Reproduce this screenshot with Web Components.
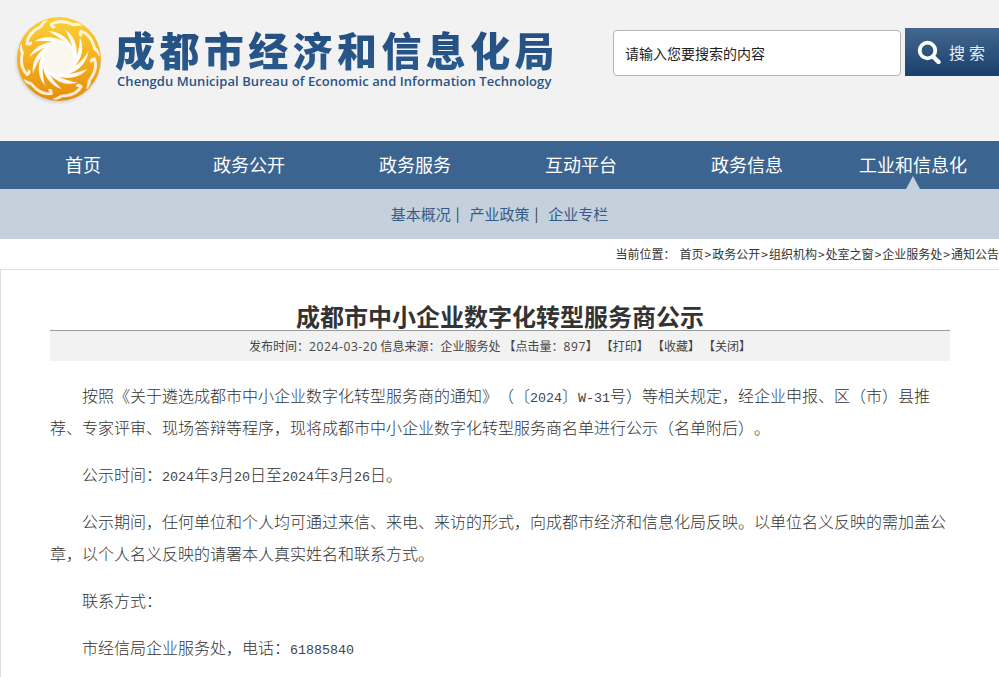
<!DOCTYPE html>
<html lang="zh">
<head>
<meta charset="utf-8">
<title>成都市中小企业数字化转型服务商公示</title>
<style>
html, body { margin: 0; padding: 0; background: #fff; overflow: hidden; }
body { font-family: "Noto Sans CJK SC", sans-serif; text-spacing-trim: space-all; }
.n { font-family: "Liberation Mono", monospace; font-size: 13.33px; line-height: 1; color: #444; }
</style>
</head>
<body>
<site-header></site-header>
<main-nav></main-nav>
<sub-nav></sub-nav>
<bread-crumb></bread-crumb>
<article-card>
  <p>按照《关于遴选成都市中小企业数字化转型服务商的通知》（〔<span class="n">2024</span>〕<span class="n">W-31</span>号）等相关规定，经企业申报、区（市）县推荐、专家评审、现场答辩等程序，现将成都市中小企业数字化转型服务商名单进行公示（名单附后）。</p>
  <p>公示时间：<span class="n">2024</span>年<span class="n">3</span>月<span class="n">20</span>日至<span class="n">2024</span>年<span class="n">3</span>月<span class="n">26</span>日。</p>
  <p>公示期间，任何单位和个人均可通过来信、来电、来访的形式，向成都市经济和信息化局反映。以单位名义反映的需加盖公章，以个人名义反映的请署本人真实姓名和联系方式。</p>
  <p>联系方式：</p>
  <p>市经信局企业服务处，电话：<span class="n">61885840</span></p>
</article-card>
<script>
const FONT = `"Noto Sans CJK SC", sans-serif`

class SiteLogo extends HTMLElement {
    constructor() {
        super()
        this.attachShadow({mode: 'open'})
        this.shadowRoot.innerHTML = this.getTemplate()
    }

    getBlades() {
        let out = ''
        for (let i = 0; i < 11; i++) {
            const a = i * 360 / 11
            out += `<path transform="rotate(${a} 48 48)" d="M37 20 C47 20 58 26 63 40 L58 37 C54 31 47 25 37 20Z" fill="#fff" opacity=".95"/>`
        }
        for (let i = 0; i < 7; i++) {
            const a = i * 360 / 7 + 12
            out += `<path transform="rotate(${a} 48 48)" d="M33 14 C38 9 46 8 54 10 C59 8 62 9 64 11 C60 11 58 12 55 13 C47 11 40 12 35 16 L38 17 C38 20 34 20 33 18 C31 17 31 15 33 14Z" fill="#fff" opacity=".82"/>`
        }
        return out
    }

    getTemplate() {
        return `
        <svg width="96" height="96" viewBox="0 0 96 96" aria-hidden="true">
            <defs>
                <linearGradient id="gold" x1="0" y1="0" x2="0" y2="1">
                    <stop offset="0" stop-color="#fbd13a"/>
                    <stop offset=".55" stop-color="#f3ad1c"/>
                    <stop offset="1" stop-color="#e58d0d"/>
                </linearGradient>
                <radialGradient id="shade" cx=".5" cy=".5" r=".5">
                    <stop offset=".8" stop-color="#8a8a8a" stop-opacity=".6"/>
                    <stop offset="1" stop-color="#8a8a8a" stop-opacity="0"/>
                </radialGradient>
            </defs>
            <circle cx="47" cy="50" r="44" fill="url(#shade)"/>
            <circle cx="48" cy="48" r="42" fill="url(#gold)"/>
            <circle cx="48" cy="48" r="18" fill="#faf7ef"/>
            ${this.getBlades()}
        </svg>
        <style>
        :host { display: block; width: 96px; height: 96px; flex: none; }
        svg { display: block; }
        </style>
        `
    }
}

class SearchBox extends HTMLElement {
    constructor() {
        super()
        this.attachShadow({mode: 'open'})
        this.shadowRoot.innerHTML = `
        <div class="field">请输入您要搜索的内容</div>
        <div class="btn">
            <svg width="24" height="24" viewBox="0 0 24 24" aria-hidden="true">
                <circle cx="10.5" cy="10.5" r="7.8" fill="none" stroke="#fff" stroke-width="3.8"/>
                <path d="M16 16.5 L21.5 22" stroke="#fff" stroke-width="4.4" stroke-linecap="round"/>
            </svg>
            <span>搜索</span>
        </div>
        <style>
        :host { display: flex; gap: 4px; flex: none; font-family: ${FONT}; }
        .field {
            box-sizing: border-box; width: 288px; height: 46px; padding-left: 11px;
            background: #fff; border: 1px solid #b5b5b5; border-radius: 4px;
            font-size: 14px; line-height: 44px; color: #222; white-space: nowrap;
        }
        .btn {
            box-sizing: border-box; width: 94px; height: 48px; margin-top: -2px; padding-left: 12px;
            display: flex; align-items: center; gap: 8px;
            background: linear-gradient(#42688f, #1a3f6d);
            color: #e8edf3; font-size: 16px; letter-spacing: 4px; white-space: nowrap;
        }
        </style>
        `
    }
}

class SiteHeader extends HTMLElement {
    constructor() {
        super()
        this.attachShadow({mode: 'open'})
        this.shadowRoot.innerHTML = `
        <site-logo></site-logo>
        <div class="brand">
            <div class="cn">成都市经济和信息化局</div>
            <div class="en">Chengdu Municipal Bureau of Economic and Information Technology</div>
        </div>
        <search-box></search-box>
        <style>
        :host { display: flex; height: 141px; background: #f2f2f2; box-sizing: border-box; padding: 11px 0 0 11px; overflow: hidden; }
        .brand { width: 498px; flex: none; margin-left: 8px; padding-top: 15px; }
        .cn {
            font-size: 40px; line-height: 46px; font-weight: 900; letter-spacing: 4.4px; white-space: nowrap;
            background: linear-gradient(#234d80, #2a5a8c);
            -webkit-background-clip: text; background-clip: text; color: transparent;
        }
        .en { font-family: "Open Sans", sans-serif; font-weight: 600; font-size: 13px; letter-spacing: .065px; line-height: 18px; color: #2b5384; white-space: nowrap; margin-left: 2px; }
        search-box { margin-top: 19px; }
        </style>
        `
    }
}

class MainNav extends HTMLElement {
    constructor() {
        super()
        this.attachShadow({mode: 'open'})
        const items = ['首页', '政务公开', '政务服务', '互动平台', '政务信息', '工业和信息化']
        this.shadowRoot.innerHTML = `
        ${items.map((t, i) => `<a class="${i == 5 ? 'on' : ''}">${t}</a>`).join('')}
        <style>
        :host { display: grid; grid-template-columns: repeat(6, 166px); height: 48px; background: #3b6590; font-family: ${FONT}; }
        a { position: relative; text-align: center; color: #fff; font-size: 18px; line-height: 46px; white-space: nowrap; }
        a.on::after {
            content: ""; position: absolute; left: 50%; bottom: 0; margin-left: -7px;
            border: 7px solid transparent; border-top: 0; border-bottom: 13px solid #c4d0dc;
        }
        </style>
        `
    }
}

class SubNav extends HTMLElement {
    constructor() {
        super()
        this.attachShadow({mode: 'open'})
        this.shadowRoot.innerHTML = `
        <span>基本概况</span><i>|</i><span>产业政策</span><i>|</i><span>企业专栏</span>
        <style>
        :host { display: flex; justify-content: center; height: 50px; background: #c4d0dc; font-family: ${FONT}; font-size: 15px; line-height: 49px; color: #355c88; }
        i { font-style: normal; margin: 0 10px 0 5px; color: #333; font-size: 14px; }
        </style>
        `
    }
}

class BreadCrumb extends HTMLElement {
    constructor() {
        super()
        this.attachShadow({mode: 'open'})
        const path = ['首页', '政务公开', '组织机构', '处室之窗', '企业服务处', '通知公告']
        this.shadowRoot.innerHTML = `
        <span class="lead">当前位置：</span>${path.map(t => `<span>${t}</span>`).join('<b>&gt;</b>')}
        <style>
        :host { display: flex; justify-content: flex-end; height: 30px; background: #fff; font-family: ${FONT}; font-size: 12px; line-height: 30px; color: #333; white-space: nowrap; }
        .lead { margin-right: 4px; }
        b { font-weight: 400; margin: 0 1px; }
        </style>
        `
    }
}

class ArticleCard extends HTMLElement {
    constructor() {
        super()
        this.attachShadow({mode: 'open'})
        this.shadowRoot.innerHTML = `
        <h1>成都市中小企业数字化转型服务商公示</h1>
        <div class="meta">
            <span>发布时间：<span class="d">2024-03-20</span> 信息来源：企业服务处</span>
            <span>【点击量：<span class="d">897</span>】</span><span>【打印】</span><span>【收藏】</span><span>【关闭】</span>
        </div>
        <div class="body"><slot></slot></div>
        <style>
        :host { display: block; box-sizing: border-box; height: 408px; padding: 30px 49px 0 49px; background: #fff; border: 1px solid #ddd; border-width: 1px 0 0 1px; font-family: ${FONT}; overflow: hidden; text-spacing-trim: space-all; }
        h1 { margin: 0; font-size: 24px; line-height: 31px; font-weight: 700; color: #333; text-align: center; border-bottom: 1px solid #999; height: 30px; }
        .meta { display: flex; justify-content: center; gap: 3px; height: 30px; background: #f2f2f2; font-size: 12px; line-height: 29px; color: #444; white-space: nowrap; }
        .d { font-family: "Open Sans", sans-serif; line-height: 1; letter-spacing: .6px; }
        .body { padding-top: 18px; }
        ::slotted(p) { margin: 0 0 15px; font-size: 16px; line-height: 32px; text-indent: 32px; color: #333; font-weight: 300; }
        </style>
        `
    }
}

customElements.define('site-logo', SiteLogo)
customElements.define('search-box', SearchBox)
customElements.define('site-header', SiteHeader)
customElements.define('main-nav', MainNav)
customElements.define('sub-nav', SubNav)
customElements.define('bread-crumb', BreadCrumb)
customElements.define('article-card', ArticleCard)
</script>
</body>
</html>
